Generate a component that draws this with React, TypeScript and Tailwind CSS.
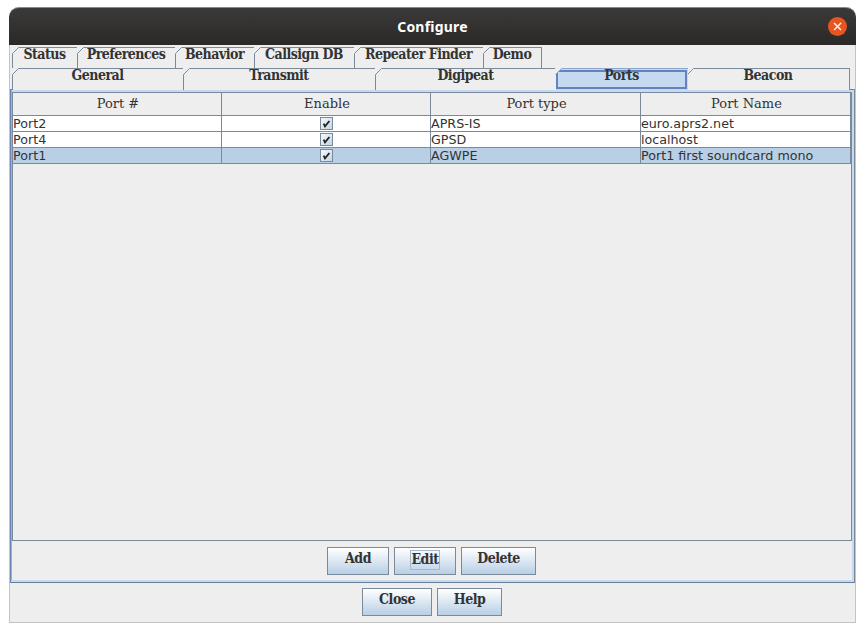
const serif = "font-['DejaVu_Serif',serif]";
const bold = "font-['DejaVu_Serif_Condensed','DejaVu_Serif',serif]";

function Corner({ color }: { color: string }) {
  return (
    <svg className="absolute -left-px -top-px" width="7" height="7" viewBox="0 0 7 7">
      <path d="M0 0H7L0 7Z" fill="#eeeeee" />
      <path d="M0.5 6.5L6.5 0.5" stroke={color} strokeWidth="1" fill="none" />
    </svg>
  );
}

function Tab({ label, w, active }: { label: string; w: string; active?: boolean }) {
  const text = `flex items-start justify-center leading-[13px] text-[14px] font-bold text-[#333333] ${bold}`;
  if (active) {
    return (
      <div className={`relative z-10 ${w} h-[24px] -mr-px shrink-0 bg-[#c5d9f0] border-t border-[#8ea6cc]`}>
        <div className={`mt-px mr-px h-[19px] border-2 border-[#6382bf] ${text}`}>
          <span className="tracking-[-0.5px] -mt-[3px]">{label}</span>
        </div>
        <Corner color="#8ea6cc" />
      </div>
    );
  }
  return (
    <div className={`relative ${w} h-[22px] -mr-px shrink-0 border-t border-l border-r border-[#7a8a99] bg-[#eeeeee] pr-[1px] ${text}`}>
      <span className="tracking-[-0.5px]">{label}</span>
      <Corner color="#7a8a99" />
    </div>
  );
}

function Check() {
  return (
    <div className="w-[13px] h-[13px] border border-[#7a8a99] bg-gradient-to-br from-[#f4f8fc] to-[#c5d5e6] flex items-center justify-center">
      <svg width="9" height="9" viewBox="0 0 9 9">
        <path d="M1.6 4.6L3 7.4L7.4 2" stroke="#222222" strokeWidth="1.8" fill="none" />
      </svg>
    </div>
  );
}

function Row({ a, b, c, sel }: { a: string; b: string; c: string; sel?: boolean }) {
  const cell = 'h-[16px] border-b border-r border-[#7a8a99] leading-[15px] overflow-hidden whitespace-nowrap';
  return (
    <div className={`flex text-[12.7px] text-[#333333] font-['DejaVu_Sans',sans-serif] ${sel ? 'bg-[#b8cfe5]' : 'bg-white'}`}>
      <div className={`${cell} w-[209px]`}>{a}</div>
      <div className={`${cell} w-[209px] flex items-center justify-center`}><Check /></div>
      <div className={`${cell} w-[210px]`}>{b}</div>
      <div className={`${cell} w-[210px]`}>{c}</div>
    </div>
  );
}

function Head({ label, w }: { label: string; w: string }) {
  return (
    <div className={`${w} h-[23px] border-b border-r border-[#7a8a99] bg-[#eeeeee] flex items-center justify-center pl-[2px] text-[13px] text-[#333333] ${serif}`}>
      {label}
    </div>
  );
}

function Btn({ label, w, focus }: { label: string; w: string; focus?: boolean }) {
  return (
    <button className={`${w} h-[28px] border border-[#7a8a99] bg-gradient-to-b from-white to-[#b8cfe5] flex items-center justify-center text-[14px] font-bold text-[#333333] ${bold}`}>
      <span className={`tracking-[-0.5px] leading-[16px] h-[20px] -mt-[3px] ${focus ? 'border border-[#a3b8cc] w-[30px] flex justify-center' : ''}`}>{label}</span>
    </button>
  );
}

export default function App() {
  return (
    <div className="w-[865px] h-[631px] bg-white pt-[7px] pl-[9px]">
      <div className="w-[847px] h-[616px] rounded-t-[10px] border-x border-b border-[#c4c4c4] bg-[#eeeeee] flex flex-col">
        <div className="-mx-px h-[38px] shrink-0 rounded-t-[10px] bg-gradient-to-b from-[#3c3a38] to-[#2b2928] flex items-center pl-[28px] border-t border-[#888888]">
          <div className="flex-1 text-center text-white text-[14px] font-bold font-['Noto_Sans',sans-serif] tracking-[0.2px]">Configure</div>
          <div className="mr-[9px] w-[19px] h-[19px] rounded-full bg-[#e95420] flex items-center justify-center">
            <svg width="9" height="9" viewBox="0 0 9 9"><path d="M1 1L8 8M8 1L1 8" stroke="white" strokeWidth="1.4" /></svg>
          </div>
        </div>
        <div className="pl-[2px] pt-[2px] flex shrink-0 h-[23px]">
          <Tab label="Status" w="w-[66px]" />
          <Tab label="Preferences" w="w-[99px]" />
          <Tab label="Behavior" w="w-[80px]" />
          <Tab label="Callsign DB" w="w-[101px]" />
          <Tab label="Repeater Finder" w="w-[130px]" />
          <Tab label="Demo" w="w-[59px]" />
        </div>
        <div className="pl-[2px] flex shrink-0 h-[21px]">
          <Tab label="General" w="w-[172px]" />
          <Tab label="Transmit" w="w-[193px]" />
          <Tab label="Digipeat" w="w-[182px]" />
          <Tab label="Ports" w="w-[132px]" active />
          <Tab label="Beacon" w="w-[163px]" />
        </div>
        <div className="h-[494px] shrink-0 border border-t-[#6382bf] border-l-[#6b85b5] border-r-[#7a8a99] border-b-[#6a7f96] bg-[#eeeeee] flex flex-col shadow-[inset_-2px_-2px_0_#c5d9f0,inset_1px_0_0_#8fb0e8,inset_0_2px_0_#c5d9f0]">
          <div className="ml-[1px] mt-[2px] w-[840px] h-[449px] shrink-0 border border-[#7a8a99]">
            <div className="flex">
              <Head label="Port #" w="w-[209px]" />
              <Head label="Enable" w="w-[209px]" />
              <Head label="Port type" w="w-[210px]" />
              <Head label="Port Name" w="w-[210px]" />
            </div>
            <Row a="Port2" b="APRS-IS" c="euro.aprs2.net" />
            <Row a="Port4" b="GPSD" c="localhost" />
            <Row a="Port1" b="AGWPE" c="Port1 first soundcard mono" sel />
          </div>
          <div className="flex justify-center gap-[5px] pt-[6px] pr-[2px]">
            <Btn label="Add" w="w-[62px]" />
            <Btn label="Edit" w="w-[62px]" focus />
            <Btn label="Delete" w="w-[75px]" />
          </div>
        </div>
        <div className="flex justify-center gap-[5px] pt-[5px] pr-[1px]">
          <Btn label="Close" w="w-[70px]" />
          <Btn label="Help" w="w-[65px]" />
        </div>
      </div>
    </div>
  );
}
